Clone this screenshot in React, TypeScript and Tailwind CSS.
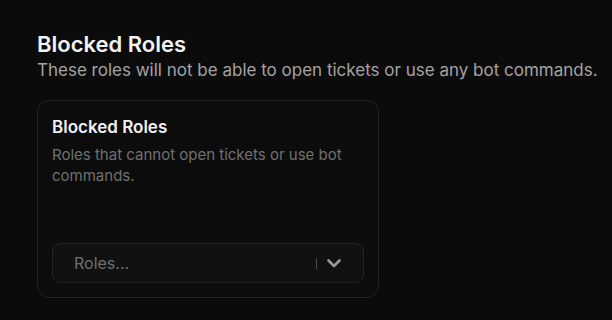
import React from 'react'

function RolesSelect() {
  return (
    <div className="flex h-[40px] w-full items-center rounded-lg border border-[#242424] bg-[#111111] pl-[21px] pr-[17px]">
      <span className="flex-1 text-[16px] text-[#6f6f6f]">Roles...</span>
      <div className="flex items-center gap-[5px]">
        <span className="h-[11px] w-px bg-[#4a4a4a]" />
        <svg width="24" height="24" viewBox="0 0 24 24" fill="none" stroke="#9a9a9a" strokeWidth="2.6" strokeLinecap="round" strokeLinejoin="round">
          <path d="M6.5 9.5l5.5 5.5 5.5-5.5" />
        </svg>
      </div>
    </div>
  )
}

function App() {
  return (
    <div
      className="min-h-[320px] w-full bg-[#0b0b0b] pl-[37px] pt-[30px]"
      style={{ fontFamily: 'Inter, "Noto Sans", sans-serif' }}
    >
      <h2 className="text-[22px] font-semibold leading-[28px] text-[#f2f2f2]">Blocked Roles</h2>
      <p className="mt-[1px] text-[17px] leading-[22px] text-[#a3a3a3]">
        These roles will not be able to open tickets or use any bot commands.
      </p>
      <div className="mt-[19px] flex h-[198px] w-[342px] flex-col rounded-xl border border-[#232323] bg-[#0c0c0c] px-[14px] pb-[14px] pt-[14px]">
        <h3 className="text-[17px] font-semibold leading-[24px] text-[#f0f0f0]">Blocked Roles</h3>
        <p className="mt-[5px] text-[15px] leading-[21px] text-[#707070]">
          Roles that cannot open tickets or use bot commands.
        </p>
        <div className="mt-auto">
          <RolesSelect />
        </div>
      </div>
    </div>
  )
}

export default App
